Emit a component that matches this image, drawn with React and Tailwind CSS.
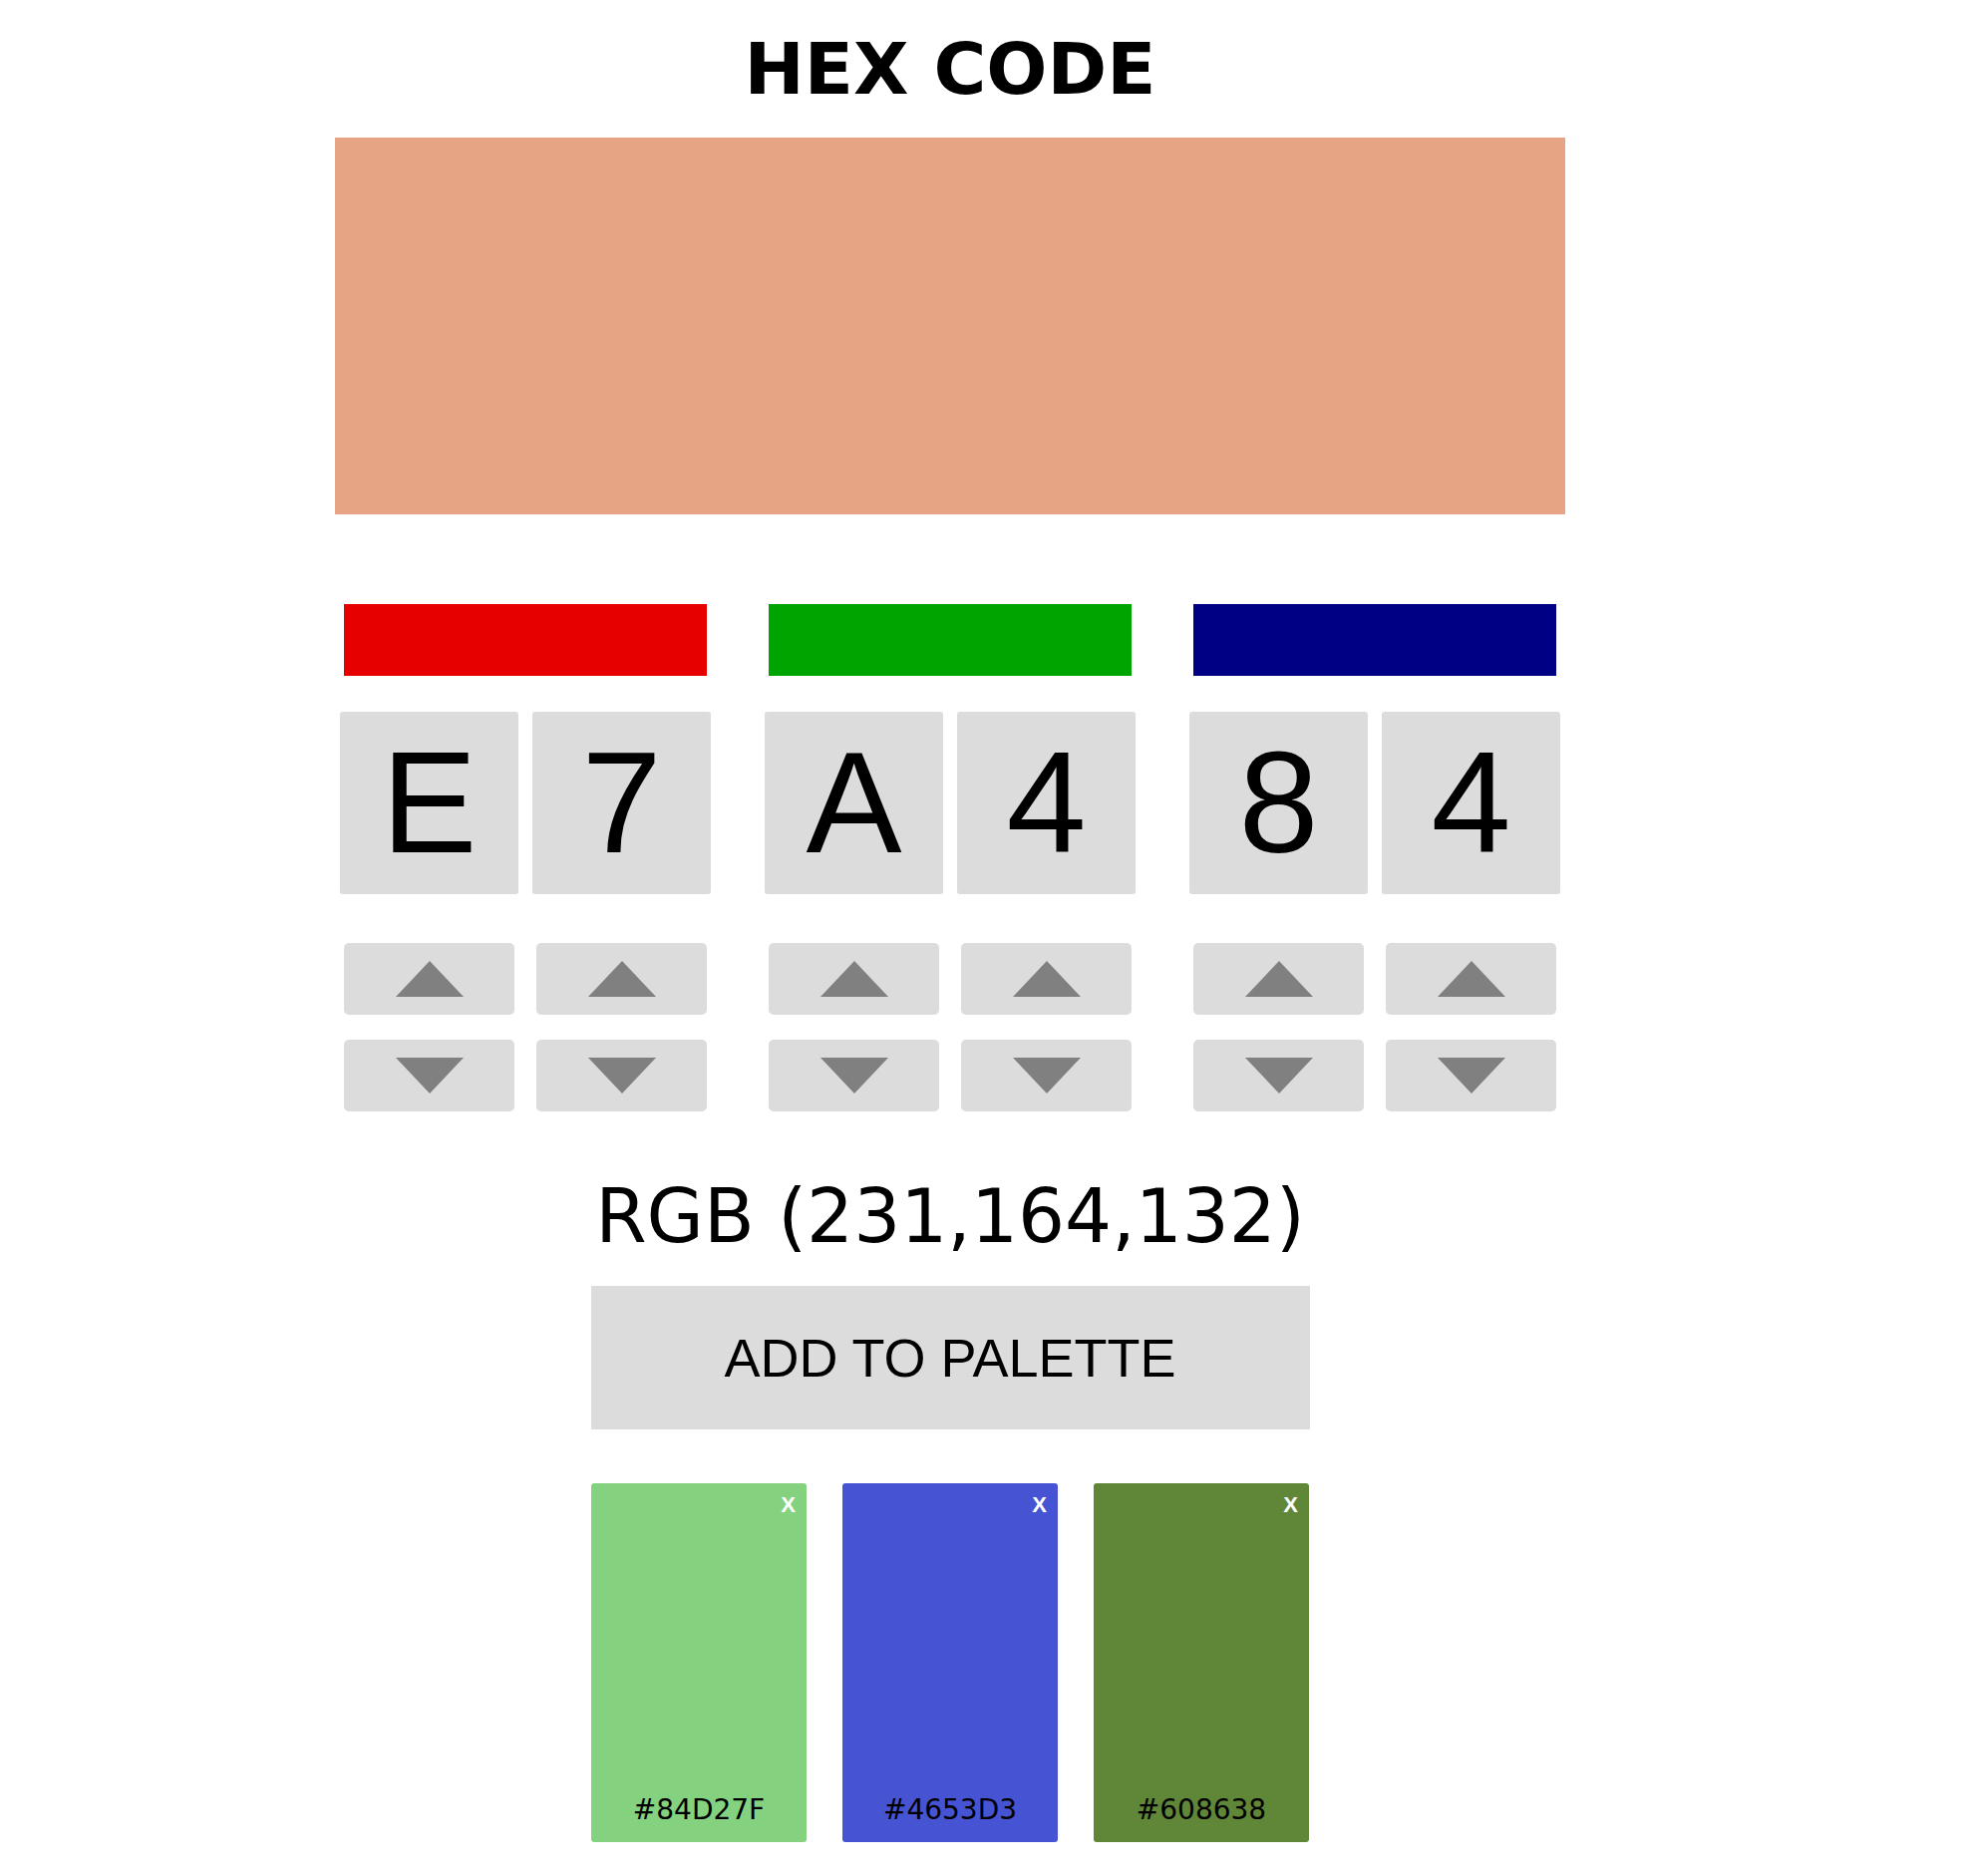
import React from 'react';

const channels = [
  { bar: 'bg-[#e70000]', digits: ['E', '7'] },
  { bar: 'bg-[#00a400]', digits: ['A', '4'] },
  { bar: 'bg-[#000084]', digits: ['8', '4'] },
];

const palette = [
  { hex: '#84D27F', bg: 'bg-[#84d27f]' },
  { hex: '#4653D3', bg: 'bg-[#4653d3]' },
  { hex: '#608638', bg: 'bg-[#608638]' },
];

const Arrow = ({ up }) => (
  <svg width="68" height="36" viewBox="0 0 68 36">
    {up ? (
      <polygon points="0,36 34,0 68,36" fill="#808080" />
    ) : (
      <polygon points="0,0 68,0 34,36" fill="#808080" />
    )}
  </svg>
);

const Channel = ({ bar, digits }) => (
  <div className="flex w-[372px] flex-col">
    <div className={`mx-1 h-[72px] ${bar}`} />

    <div className="mt-[36px] flex gap-[14px]">
      {digits.map((d, i) => (
        <div
          key={i}
          className="flex h-[183px] w-[179px] items-center justify-center rounded-[3px] bg-[#dcdcdc] [font-family:'Liberation_Sans',Arial,sans-serif] text-[144px] leading-none text-black"
        >
          {d}
        </div>
      ))}
    </div>

    <div className="mt-[49px] grid grid-cols-2 gap-x-[22px] gap-y-[25px] px-1">
      <button className="flex h-[72px] items-center justify-center rounded-[5px] bg-[#dcdcdc]">
        <Arrow up />
      </button>
      <button className="flex h-[72px] items-center justify-center rounded-[5px] bg-[#dcdcdc]">
        <Arrow up />
      </button>
      <button className="flex h-[72px] items-center justify-center rounded-[5px] bg-[#dcdcdc]">
        <Arrow />
      </button>
      <button className="flex h-[72px] items-center justify-center rounded-[5px] bg-[#dcdcdc]">
        <Arrow />
      </button>
    </div>
  </div>
);

export default function App() {
  return (
    <div className="flex min-h-screen justify-center bg-white pr-[62px] pt-[33px] pb-[34px] [font-family:'DejaVu_Sans',sans-serif] text-black">
      <div className="flex w-[1234px] flex-col items-center">
        <h1 className="mb-[33px] text-[72px] font-bold leading-none">HEX CODE</h1>

        {/* current colour */}
        <div className="h-[378px] w-full bg-[#e7a484]" />

        <div className="mt-[90px] flex w-full gap-[54px] px-[5px]">
          {channels.map((c, i) => (
            <Channel key={i} bar={c.bar} digits={c.digits} />
          ))}
        </div>

        <p className="mt-[68px] text-[74px] leading-none">RGB (231,164,132)</p>

        <button className="mt-[33px] flex h-[144px] w-[721px] items-center justify-center bg-[#dcdcdc] [font-family:'Liberation_Sans',Arial,sans-serif] text-[54px] leading-none text-black">
          ADD TO PALETTE
        </button>

        <div className="mt-[54px] flex w-[720px] gap-[36px]">
          {palette.map((p) => (
            <div
              key={p.hex}
              className={`relative flex h-[360px] w-[216px] flex-col items-center justify-end rounded-[3px] pb-[18px] ${p.bg}`}
            >
              <span className="absolute right-[11px] top-[11px] [font-family:'Liberation_Sans',Arial,sans-serif] text-[22px] font-bold leading-none text-white">
                X
              </span>
              <span className="text-[28px] leading-none text-black">{p.hex}</span>
            </div>
          ))}
        </div>
      </div>
    </div>
  );
}
